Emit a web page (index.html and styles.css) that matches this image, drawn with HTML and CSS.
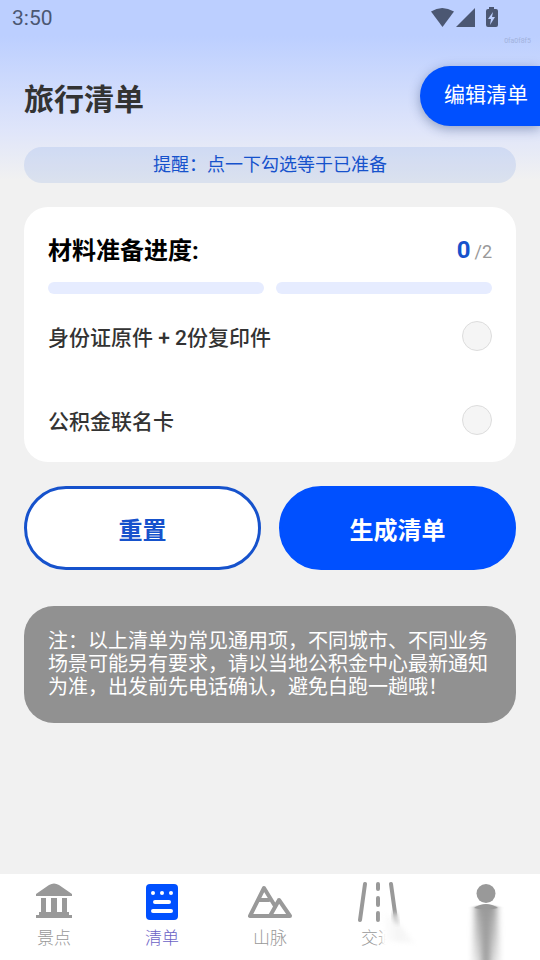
FILE: index.html
```html
<!DOCTYPE html>
<html lang="zh-CN">
<head>
<meta charset="utf-8">
<meta name="viewport" content="width=device-width, initial-scale=1">
<title>旅行清单</title>
<link rel="stylesheet" href="styles.css">
</head>
<body>
<div class="status">
  <span class="clock">3:50</span>
  <svg class="status-icons" width="68" height="22" viewBox="0 0 68 22" aria-hidden="true">
    <path d="M1 4.500Q12-2.500 24 4.500L12.500 20Z"/>
    <path d="M45 1V20H26Z"/>
    <path fill-rule="evenodd" d="M59 0h5v2h2q2 0 2 2v14q0 2-2 2H58q-2 0-2-2V4q0-2 2-2h1ZM63 5l-5 7h3l-1 6 5-8h-3Z"/>
  </svg>
  <span class="build">0fa0f8f5</span>
</div>

<header class="top">
  <h1>旅行清单</h1>
  <button class="edit" type="button">编辑清单</button>
</header>

<main>
  <p class="tip">提醒：点一下勾选等于已准备</p>

  <section class="card">
    <div class="card-head">
      <h2>材料准备进度:</h2>
      <p class="count"><strong>0</strong><span>/2</span></p>
    </div>
    <div class="bars"><i></i><i></i></div>
    <label class="item"><span>身份证原件 + 2份复印件</span><input type="checkbox"></label>
    <label class="item"><span>公积金联名卡</span><input type="checkbox"></label>
  </section>

  <div class="actions">
    <button class="btn reset" type="button">重置</button>
    <button class="btn create" type="button">生成清单</button>
  </div>

  <p class="note">注：以上清单为常见通用项，不同城市、不同业务场景可能另有要求，请以当地公积金中心最新通知为准，出发前先电话确认，避免白跑一趟哦！</p>
</main>

<nav class="tabs">
  <a href="#spots">
    <svg width="44" height="44" viewBox="0 0 44 44" aria-hidden="true">
      <path d="M4 14v-2L17 3q5-3 10 0l13 9v2ZM9 16h5v14H9Zm10 0h6v14h-6Zm11 0h5v14h-5ZM7 30h30v3h3v3H4v-3h3Z"/>
    </svg>
    <span>景点</span>
  </a>
  <a class="active" href="#list">
    <svg width="44" height="44" viewBox="0 0 44 44" aria-hidden="true">
      <rect x="6" y="2" width="32" height="36" rx="4"/>
      <g fill="#fff"><circle cx="13" cy="11" r="2"/><circle cx="22" cy="11" r="2"/><circle cx="31" cy="11" r="2"/></g>
      <path d="M15 20h14M13 29h18" stroke="#fff" stroke-width="4" stroke-linecap="round"/>
    </svg>
    <span>清单</span>
  </a>
  <a href="#mountains">
    <svg width="44" height="44" viewBox="0 0 44 44" aria-hidden="true">
      <path d="M2 34L16 6 27 24M2 34h40L31 18 22 34M11 18h10" fill="none" stroke="currentColor" stroke-width="4" stroke-linecap="round" stroke-linejoin="round"/>
    </svg>
    <span>山脉</span>
  </a>
  <a class="traffic" href="#traffic">
    <svg width="44" height="44" viewBox="0 0 44 44" aria-hidden="true">
      <path d="M9 2L4 38M35 2l5 36M22 2v5M22 16v7M22 31v7" fill="none" stroke="currentColor" stroke-width="4" stroke-linecap="round"/>
    </svg>
    <span>交通</span>
    <svg class="haze" width="66" height="60" viewBox="0 0 66 60" aria-hidden="true">
      <defs>
        <linearGradient id="mist" x1="0" x2="1" y1="0" y2="0">
          <stop offset="0" stop-color="#fff"/><stop offset=".5" stop-color="#f5f5f5"/><stop offset="1" stop-color="#fcfcfc"/>
        </linearGradient>
        <filter id="soft" color-interpolation-filters="sRGB"><feGaussianBlur stdDeviation="2"/></filter>
      </defs>
      <path d="M6 12L13 16 19 15 30 8V60H3Z" fill="#fff" filter="url(#soft)"/>
      <path d="M4 12L18 20 38 44 7 40Z" fill="url(#mist)" filter="url(#soft)"/>
      <path d="M14 12Q15 22 21 25L18 12Z" fill="#bbb" filter="url(#soft)"/>
    </svg>
  </a>
  <a href="#me" aria-label="我的">
    <svg width="44" height="78" viewBox="0 0 44 78" aria-hidden="true">
      <defs>
        <linearGradient id="body" x1="0" x2="0" y1="0" y2="1">
          <stop offset="0" stop-color="#999"/><stop offset=".3" stop-color="#999" stop-opacity=".75"/><stop offset="1" stop-color="#999" stop-opacity=".3"/>
        </linearGradient>
        <filter id="fade" x="-40%" width="180%" color-interpolation-filters="sRGB"><feGaussianBlur stdDeviation="3 0"/></filter>
      </defs>
      <circle cx="22" cy="11.500" r="9.500"/>
      <path d="M10 26Q22 18 34 26Q22 29 10 26Z"/>
      <g filter="url(#fade)">
        <path d="M11 25Q22 20 33 25L35 78H9Z" fill="url(#body)"/>
        <path d="M18 26H26V78H18Z" fill="#999"/>
      </g>
    </svg>
  </a>
</nav>
</body>
</html>
```
FILE: styles.css
```css
* { box-sizing: border-box; }

body {
  margin: 0;
  min-height: 100vh;
  display: flex;
  flex-direction: column;
  font-family: Roboto, "Noto Sans CJK SC", sans-serif;
  color: #333;
  background: #f1f1f1 linear-gradient(#bccfff 36px, #dfe5fa 130px, #f1f1f1 180px) no-repeat;
}

h1, h2, p { margin: 0; }
button { font: inherit; cursor: pointer; }

.status {
  position: relative;
  display: flex;
  justify-content: space-between;
  align-items: center;
  height: 36px;
  padding: 0 42px 0 12px;
  color: #4b5772;
}
.clock { font-size: 21px; }
.status-icons { fill: currentColor; }
.build {
  position: absolute;
  right: 9px;
  top: 36px;
  font-size: 7px;
  line-height: 10px;
  color: #a2b2dc;
}

.top {
  display: flex;
  justify-content: space-between;
  align-items: flex-start;
  padding: 30px 0 19px 24px;
}
h1 { padding-top: 6px; font-size: 30px; line-height: 56px; font-weight: 700; }
.edit {
  height: 60px;
  padding: 0 12px 6px 24px;
  border: 0;
  border-radius: 30px 0 0 30px;
  background: #0050ff;
  color: #fff;
  font-size: 21px;
  box-shadow: 0 3px 12px rgba(30, 55, 110, .4);
}

main {
  flex: 1;
  padding: 0 24px 24px;
}
.tip {
  border-radius: 18px;
  background: rgba(20, 85, 215, .1);
  color: #1652cc;
  font-size: 18px;
  line-height: 36px;
  text-align: center;
}
.card {
  margin-top: 24px;
  padding: 24px 24px 0;
  border-radius: 24px;
  background: #fff;
}
.card-head {
  display: flex;
  justify-content: space-between;
  align-items: center;
  height: 39px;
  margin-bottom: 12px;
}
h2 { font-size: 24px; line-height: 36px; font-weight: 700; color: #000; }
.count {
  display: flex;
  align-items: baseline;
  gap: 4px;
  font-size: 18px;
  line-height: 36px;
  color: #999;
}
.count strong { font-size: 24px; color: #1652cc; }
.bars { display: flex; gap: 12px; }
.bars i { flex: 1; height: 12px; border-radius: 6px; background: #e6ecff; }

.item {
  display: flex;
  justify-content: space-between;
  align-items: center;
  height: 84px;
  font-size: 21px;
  font-weight: 500;
}
.item input {
  appearance: none;
  width: 30px;
  height: 30px;
  margin: 0;
  border: 1px solid #ddd;
  border-radius: 50%;
  background: #f5f5f5;
}
.item input:checked { border-color: #0050ff; background: #0050ff; }

.actions { display: flex; gap: 18px; margin-top: 24px; }
.btn {
  flex: 1;
  height: 84px;
  border: 3px solid #0050ff;
  border-radius: 42px;
  font-size: 24px;
  font-weight: 700;
}
.reset { border-color: #1652cc; background: #fff; color: #1652cc; }
.create { background: #0050ff; color: #fff; }

.note {
  margin-top: 36px;
  padding: 24px;
  border-radius: 30px;
  background: #919191;
  color: #fff;
  font-size: 20px;
  line-height: 23px;
}

.tabs {
  display: grid;
  grid-template-columns: repeat(5, 1fr);
  height: 86px;
  padding-top: 8px;
  background: #fff;
}
.tabs a {
  display: flex;
  flex-direction: column;
  align-items: center;
  color: #999;
  font-size: 17px;
  font-weight: 300;
  line-height: 24px;
  text-decoration: none;
}
.tabs svg { flex: none; fill: currentColor; }
.tabs .active { color: #0050ff; }
.tabs .active span { color: #6c62c6; }
.traffic { position: relative; }
.tabs .haze { position: absolute; left: 50%; top: 18px; }
```
